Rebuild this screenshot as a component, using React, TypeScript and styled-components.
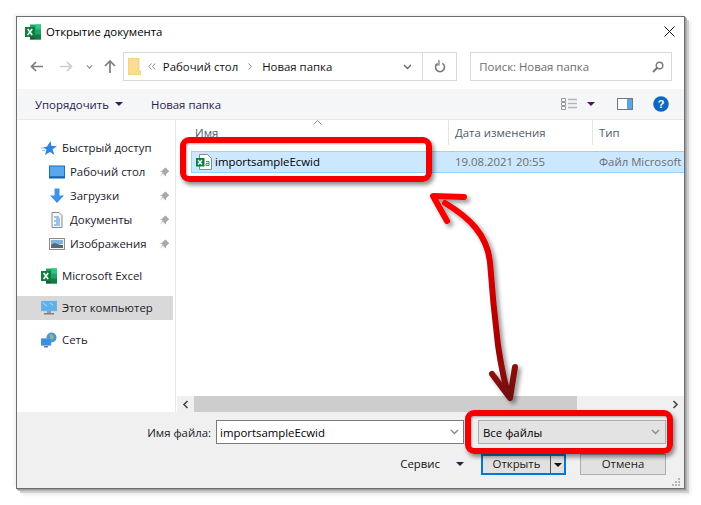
import React from 'react'
import styled, { createGlobalStyle } from 'styled-components'

const GlobalStyle = createGlobalStyle`
  html, body { margin: 0; padding: 0; background: #fff; }
  body { font-family: "Open Sans", "Noto Sans", "Liberation Sans", sans-serif; font-size: 11.4px; color: #1a1a1a; }
`

const Page = styled.div`
  width: 701px;
  height: 505px;
  padding: 16px 0 0 16px;
  box-sizing: border-box;
  overflow: hidden;
`
const Window = styled.div`
  position: relative;
  width: 669px;
  height: 473px;
  box-sizing: border-box;
  border: 1px solid #6e6e6e;
  background: #fff;
  display: flex;
  flex-direction: column;
  box-shadow: 1px 1px 0 #a0a0a0, 2px 2px 0 #b4b4b4, 4px 4px 0 #cfcfcf, 6px 6px 3px #ececec, -2px -2px 3px #f1f1f1;
`
const TitleBar = styled.div`
  height: 33px;
  box-sizing: border-box;
  padding: 0 0 4px 8px;
  display: flex;
  align-items: center;
  gap: 5px;
  color: #000;
`
const TitleText = styled.span`flex: 1;`
const CloseButton = styled.div`
  width: 30px;
  height: 26px;
  display: flex;
  align-items: center;
  justify-content: center;
`
const NavBar = styled.div`
  height: 39px;
  box-sizing: border-box;
  padding: 2px 12px 8px 12px;
  display: flex;
  align-items: stretch;
`
const NavButtons = styled.div`
  width: 94px;
  display: flex;
  align-items: center;
`
const NavIcon = styled.span<{ $w: number }>`
  width: ${p => p.$w}px;
  display: flex;
  justify-content: center;
`
const AddressBox = styled.div`
  width: 335px;
  box-sizing: border-box;
  border: 1px solid #d9d9d9;
  display: flex;
  align-items: center;
  padding-left: 4px;
  color: #111;
`
const Crumb = styled.span<{ $ml: number }>`
  display: flex;
  margin-left: ${p => p.$ml}px;
`
const AddressSpacer = styled.div`flex: 1;`
const AddressEnd = styled.div`
  width: 33px;
  height: 100%;
  display: flex;
  align-items: center;
  justify-content: center;
  border-left: 1px solid #d9d9d9;
`
const AddressChevron = styled.span`
  display: flex;
  margin-right: 10px;
`
const SearchBox = styled.div`
  width: 202px;
  margin-left: 13px;
  box-sizing: border-box;
  border: 1px solid #d9d9d9;
  display: flex;
  align-items: center;
  justify-content: space-between;
  padding: 0 7px 0 8px;
  color: #6d6d6d;
`
const Toolbar = styled.div`
  height: 31px;
  box-sizing: border-box;
  background: #f5f6f7;
  border-bottom: 1px solid #e8e9ea;
  display: flex;
  align-items: center;
  padding: 0 15px 0 18px;
  color: #2b1a4f;
`
const ToolLabel = styled.span<{ $w?: number }>`
  display: flex;
  align-items: center;
  gap: 6px;
  width: ${p => (p.$w ? `${p.$w}px` : 'auto')};
`
const ToolRight = styled.div`
  margin-left: auto;
  display: flex;
  align-items: center;
`
const ToolIcon = styled.span<{ $ml: number }>`
  display: flex;
  margin-left: ${p => p.$ml}px;
`
const Caret = styled.span<{ $color?: string }>`
  width: 0;
  height: 0;
  border-left: 4px solid transparent;
  border-right: 4px solid transparent;
  border-top: 4px solid ${p => p.$color || '#3a2050'};
`
const Main = styled.div`
  flex: 1;
  min-height: 0;
  display: flex;
`
const Sidebar = styled.div`
  width: 159px;
  box-sizing: border-box;
  border-right: 1px solid #e8e8e8;
  padding-top: 16px;
  display: flex;
  flex-direction: column;
`
const NavRow = styled.div<{ $sub?: boolean; $active?: boolean; $gap?: boolean }>`
  height: 24px;
  width: 156px;
  flex: none;
  margin-top: ${p => (p.$gap ? 8 : 0)}px;
  display: flex;
  align-items: center;
  gap: 5px;
  padding-left: ${p => (p.$sub ? 32 : 24)}px;
  box-sizing: border-box;
  background: ${p => (p.$active ? '#d9d9d9' : 'transparent')};
  color: #1a1a2a;
`
const NavLabel = styled.span`
  flex: 1;
  padding-bottom: 2px;
  white-space: nowrap;
`
const PinSlot = styled.span`
  display: flex;
  margin-right: 3px;
`
const FilePane = styled.div`
  flex: 1;
  min-width: 0;
  position: relative;
  display: flex;
  flex-direction: column;
`
const SortMark = styled.span`
  position: absolute;
  left: 137px;
  top: 0;
  display: flex;
`
const HeaderRow = styled.div`
  height: 25px;
  display: grid;
  grid-template-columns: 272px 144px 1fr;
`
const HeaderCell = styled.div<{ $first?: boolean }>`
  padding-left: ${p => (p.$first ? 19 : 6)}px;
  border-left: ${p => (p.$first ? 'none' : '1px solid #e5e5e5')};
  display: flex;
  align-items: center;
  box-sizing: border-box;
  color: #4d5a6a;
`
const FileRow = styled.div`
  height: 22px;
  margin: 6px 0 0 15px;
  display: grid;
  grid-template-columns: 256px 144px 1fr;
  background: #cce8ff;
  border-top: 1px solid #99d1ff;
  border-bottom: 1px solid #99d1ff;
  border-left: 1px solid #99d1ff;
  box-sizing: border-box;
  overflow: hidden;
`
const FileName = styled.div`
  display: flex;
  align-items: center;
  gap: 3px;
  padding-left: 4px;
  color: #000;
`
const FileNameText = styled.span`
  padding-bottom: 2px;
`
const FileMeta = styled.div`
  display: flex;
  align-items: center;
  padding: 0 0 2px 7px;
  color: #6d6d6d;
  white-space: nowrap;
`
const Spacer = styled.div`flex: 1;`
const Scrollbar = styled.div`
  height: 16px;
  margin-left: 1px;
  display: flex;
  align-items: center;
  background: #f0f0f0;
`
const ScrollArrow = styled.span`
  width: 17px;
  height: 100%;
  display: flex;
  align-items: center;
  justify-content: center;
`
const ScrollThumb = styled.div`
  width: 383px;
  height: 100%;
  background: #cdcdcd;
`
const ScrollTrack = styled.div`flex: 1;`
const Footer = styled.div`
  height: 76px;
  box-sizing: border-box;
  background: #f0f0f0;
  position: relative;
  padding: 8px 18px 0 0;
  display: flex;
  flex-direction: column;
  align-items: flex-end;
`
const InputRow = styled.div`
  display: flex;
  align-items: center;
  height: 24px;
`
const FieldLabel = styled.span`
  margin-right: 5px;
  color: #1a1a2a;
`
const NameInput = styled.div`
  width: 248px;
  height: 24px;
  box-sizing: border-box;
  background: #fff;
  border: 1px solid #7a7a7a;
  display: flex;
  align-items: center;
  justify-content: space-between;
  padding: 0 4px 0 3px;
  color: #000;
`
const FilterSelect = styled.div`
  width: 188px;
  height: 24px;
  margin-left: 14px;
  box-sizing: border-box;
  background: #e3e3e3;
  border: 1px solid #adadad;
  display: flex;
  align-items: center;
  justify-content: space-between;
  padding: 0 5px 0 4px;
  color: #000;
`
const ButtonRow = styled.div`
  display: flex;
  align-items: center;
  margin-top: 10px;
`
const ServiceLabel = styled.span`
  display: flex;
  align-items: center;
  gap: 16px;
  margin-right: 17px;
  padding-bottom: 2px;
  color: #111;
`
const OpenButton = styled.div`
  width: 85px;
  height: 21px;
  box-sizing: border-box;
  border: 2px solid #0078d7;
  background: #e1e1e1;
  display: flex;
  align-items: stretch;
`
const OpenText = styled.span`
  flex: 1;
  display: flex;
  align-items: center;
  justify-content: center;
  padding-bottom: 2px;
`
const OpenDrop = styled.span`
  width: 13px;
  display: flex;
  align-items: center;
  justify-content: center;
  border-left: 1px solid #555;
`
const CancelButton = styled.div`
  width: 86px;
  height: 21px;
  margin-left: 14px;
  padding-bottom: 2px;
  box-sizing: border-box;
  border: 1px solid #adadad;
  background: #e1e1e1;
  display: flex;
  align-items: center;
  justify-content: center;
`
const Grip = styled.svg`
  position: absolute;
  right: 3px;
  bottom: 1px;
`
const Highlight = styled.div`
  position: absolute;
  box-sizing: border-box;
  border: 6px solid #f50000;
  border-radius: 9px;
  box-shadow: 2px 3px 4px rgba(0, 0, 0, 0.45), inset 1px 1px 2px rgba(0, 0, 0, 0.3);
  pointer-events: none;
`
const NameHighlight = styled(Highlight)`
  left: 163px;
  top: 120px;
  width: 252px;
  height: 45px;
`
const FilterHighlight = styled(Highlight)`
  left: 448px;
  top: 393px;
  width: 208px;
  height: 44px;
`
const ArrowLayer = styled.svg`
  position: absolute;
  left: -17px;
  top: -17px;
  pointer-events: none;
  overflow: visible;
`

const ExcelIcon = () => (
  <svg width="16" height="16" viewBox="0 0 16 16">
    <rect x="5" y="0.5" width="11" height="15" fill="#21a366" />
    <rect x="10.5" y="0.5" width="5.5" height="5" fill="#33c481" />
    <rect x="10.5" y="10.5" width="5.5" height="5" fill="#107c41" />
    <rect x="5" y="10.5" width="5.5" height="5" fill="#185c37" />
    <rect x="0" y="3" width="10" height="10" fill="#107c41" />
    <path d="M2.6 5l4.6 6M7.2 5l-4.6 6" stroke="#fff" strokeWidth="1.5" fill="none" />
  </svg>
)

const PinIcon = () => (
  <svg width="11" height="11" viewBox="0 0 11 11">
    <path d="M6.5 0.5l4 4-1.2.5-2.2 2.3-.3 2.2L3.600 6.400 1 10l2.500-4.800L.8 4l2.200-.3L5.300 1.500z" fill="#a9a9a9" />
  </svg>
)

const Chevron = ({ color = '#666', w = 9 }: { color?: string; w?: number }) => (
  <svg width={w} height="6" viewBox="0 0 9 6">
    <path d="M1 1l3.500 3.500L8 1" stroke={color} strokeWidth="1.300" fill="none" />
  </svg>
)

const navItems = [
  {
    label: 'Рабочий стол',
    icon: (
      <svg width="16" height="14" viewBox="0 0 16 14">
        <rect x="0.5" y="1" width="15" height="11" fill="#5aa7ec" stroke="#1a6fc0" />
        <rect x="0" y="11.5" width="16" height="2" fill="#0f62b4" />
      </svg>
    ),
  },
  {
    label: 'Загрузки',
    icon: (
      <svg width="16" height="16" viewBox="0 0 16 16">
        <path d="M5.500 0.500h5v7H15l-7 7.500-7-7.500h4.500z" fill="#3f93e6" />
      </svg>
    ),
  },
  {
    label: 'Документы',
    icon: (
      <svg width="16" height="16" viewBox="0 0 16 16">
        <path d="M3 .5h7l3 3v12H3z" fill="#f7f7f7" stroke="#8a8a8a" />
        <path d="M5 5h5M7 7h4M5 9h6M7 11h4M5 13h6" stroke="#3b8fd9" />
      </svg>
    ),
  },
  {
    label: 'Изображения',
    icon: (
      <svg width="16" height="14" viewBox="0 0 16 14">
        <rect x="0.5" y="1.5" width="15" height="11" fill="#f4f4f4" stroke="#8d8d8d" />
        <rect x="2" y="3" width="12" height="4" fill="#7fb2dc" />
        <path d="M2 11V7.500l4-1.500 4 1.500 4 .5v3z" fill="#5b6770" />
      </svg>
    ),
  },
]

export default function App() {
  return (
    <Page>
      <GlobalStyle />
      <Window>
        <TitleBar>
          <ExcelIcon />
          <TitleText>Открытие документа</TitleText>
          <CloseButton>
            <svg width="11" height="11" viewBox="0 0 11 11">
              <path d="M.5.5l10 10M10.500.5l-10 10" stroke="#111" strokeWidth="1" fill="none" />
            </svg>
          </CloseButton>
        </TitleBar>

        <NavBar>
          <NavButtons>
            <NavIcon $w={15}>
              <svg width="13" height="11" viewBox="0 0 13 11">
                <path d="M6 1L1.500 5.500 6 10M2 5.500h11" stroke="#7d7d7d" strokeWidth="1.700" fill="none" />
              </svg>
            </NavIcon>
            <NavIcon $w={14} />
            <NavIcon $w={16}>
              <svg width="13" height="11" viewBox="0 0 13 11">
                <path d="M7 1l4.500 4.500L7 10M11 5.500H0" stroke="#cdcdcd" strokeWidth="1.700" fill="none" />
              </svg>
            </NavIcon>
            <NavIcon $w={30}>
              <Chevron color="#8a8a8a" w={7} />
            </NavIcon>
            <NavIcon $w={12}>
              <svg width="12" height="13" viewBox="0 0 12 13">
                <path d="M1 6l5-5 5 5M6 1.500V13" stroke="#7d7d7d" strokeWidth="1.700" fill="none" />
              </svg>
            </NavIcon>
          </NavButtons>
          <AddressBox>
            <svg width="13" height="17" viewBox="0 0 13 17">
              <path d="M0 0h11v13h2v4H0z" fill="#fbdd8d" stroke="#e3c26f" strokeWidth="0.600" />
            </svg>
            <Crumb $ml={7}>
              <svg width="8" height="7" viewBox="0 0 8 7">
                <path d="M3.500.5L.8 3.500l2.700 3M7.200.5L4.500 3.500l2.700 3" stroke="#888" fill="none" />
              </svg>
            </Crumb>
            <Crumb $ml={7}>Рабочий стол</Crumb>
            <Crumb $ml={9}>
              <svg width="6" height="7" viewBox="0 0 6 7">
                <path d="M1.500.5l3 3-3 3" stroke="#888" fill="none" />
              </svg>
            </Crumb>
            <Crumb $ml={9}>Новая папка</Crumb>
            <AddressSpacer />
            <AddressChevron>
              <Chevron />
            </AddressChevron>
            <AddressEnd>
              <svg width="12" height="13" viewBox="0 0 12 13">
                <path d="M8.300 3.300A4.500 4.500 0 1 1 3.700 3.300" stroke="#777" strokeWidth="1.500" fill="none" />
                <path d="M4 0v5H0" transform="translate(1 0)" stroke="#777" strokeWidth="1.200" fill="none" />
              </svg>
            </AddressEnd>
          </AddressBox>
          <SearchBox>
            Поиск: Новая папка
            <svg width="12" height="12" viewBox="0 0 12 12">
              <circle cx="7.500" cy="4.500" r="3.300" stroke="#777" strokeWidth="1.400" fill="none" />
              <path d="M5 7L1 11" stroke="#777" strokeWidth="2" />
            </svg>
          </SearchBox>
        </NavBar>

        <Toolbar>
          <ToolLabel $w={116}>
            Упорядочить <Caret />
          </ToolLabel>
          <ToolLabel>Новая папка</ToolLabel>
          <ToolRight>
            <ToolIcon $ml={0}>
              <svg width="17" height="13" viewBox="0 0 17 13">
                <path d="M.5.500h4v3h-4zM.5 4.500h4v3h-4zM.5 8.500h4v3h-4z" stroke="#9a9a9a" fill="none" />
                <path d="M7 1.500h9M7 5.500h9M7 9.500h9" stroke="#b5b5b5" strokeWidth="1.500" />
              </svg>
            </ToolIcon>
            <ToolIcon $ml={9}>
              <Caret $color="#4b1a55" />
            </ToolIcon>
            <ToolIcon $ml={22}>
              <svg width="16" height="12" viewBox="0 0 16 12">
                <rect x="0.500" y="0.500" width="15" height="11" fill="#fff" stroke="#777" />
                <rect x="10" y="1" width="5" height="10" fill="#58a6e6" />
              </svg>
            </ToolIcon>
            <ToolIcon $ml={20}>
              <svg width="16" height="16" viewBox="0 0 16 16">
                <circle cx="8" cy="8" r="7.800" fill="#0f68c0" />
                <text x="8" y="12" textAnchor="middle" fontSize="11" fontWeight="700" fill="#fff" fontFamily="Liberation Sans">?</text>
              </svg>
            </ToolIcon>
          </ToolRight>
        </Toolbar>

        <Main>
          <Sidebar>
            <NavRow>
              <svg width="16" height="15" viewBox="0 0 16 15">
                <path d="M9.500 0l1 5H16l-4.500 3.500L13.500 14 9 11l-5 3 1.500-5.500L2 6.500l4-1z" fill="#2f85dc" />
                <path d="M0 7h3M1 9.500h3" stroke="#8fc0ee" />
              </svg>
              <NavLabel>Быстрый доступ</NavLabel>
            </NavRow>
            {navItems.map(item => (
              <NavRow $sub key={item.label}>
                {item.icon}
                <NavLabel>{item.label}</NavLabel>
                <PinSlot>
                  <PinIcon />
                </PinSlot>
              </NavRow>
            ))}
            <NavRow $gap>
              <ExcelIcon />
              <NavLabel>Microsoft Excel</NavLabel>
            </NavRow>
            <NavRow $gap $active>
              <svg width="16" height="16" viewBox="0 0 16 16">
                <rect x="0" y="1" width="16" height="10" fill="#5cb0ee" stroke="#9ab8d0" strokeWidth="0.500" />
                <path d="M2 3l4 3M9 3l3 2" stroke="#b8e0fb" />
                <rect x="6" y="11" width="4" height="2" fill="#9a9a9a" />
                <rect x="3" y="13" width="10" height="1.500" fill="#7f7f7f" />
              </svg>
              <NavLabel>Этот компьютер</NavLabel>
            </NavRow>
            <NavRow $gap>
              <svg width="16" height="16" viewBox="0 0 16 16">
                <circle cx="10.500" cy="5.500" r="5" fill="#4b94d8" />
                <path d="M8 2l4 1 1 3-3 2z" fill="#8bbf7a" />
                <rect x="0" y="6.500" width="10" height="7" fill="#3a8ee0" stroke="#7da9cc" strokeWidth="0.500" />
                <rect x="3" y="14" width="4" height="1.500" fill="#777" />
              </svg>
              <NavLabel>Сеть</NavLabel>
            </NavRow>
          </Sidebar>

          <FilePane>
            <SortMark>
              <svg width="9" height="5" viewBox="0 0 9 5">
                <path d="M.5 4.500l4-4 4 4" stroke="#8a8a8a" fill="none" />
              </svg>
            </SortMark>
            <HeaderRow>
              <HeaderCell $first>Имя</HeaderCell>
              <HeaderCell>Дата изменения</HeaderCell>
              <HeaderCell>Тип</HeaderCell>
            </HeaderRow>
            <FileRow>
              <FileName>
                <svg width="16" height="16" viewBox="0 0 16 16">
                  <path d="M3.500.5h8l4 4v11h-12z" fill="#fff" stroke="#8a8a8a" />
                  <rect x="0" y="4" width="8.500" height="8.500" fill="#107c41" />
                  <path d="M2 6l4 4.500M6 6l-4 4.500" stroke="#fff" strokeWidth="1.300" />
                  <path d="M10 7.500h3M13 7.500v4h-3v-2h3" stroke="#21a366" fill="none" />
                </svg>
                <FileNameText>importsampleEcwid</FileNameText>
              </FileName>
              <FileMeta>19.08.2021 20:55</FileMeta>
              <FileMeta>Файл Microsoft</FileMeta>
            </FileRow>
            <Spacer />
            <Scrollbar>
              <ScrollArrow>
                <svg width="7" height="9" viewBox="0 0 7 9">
                  <path d="M5.500 1L2 4.500 5.500 8" stroke="#444" strokeWidth="1.600" fill="none" />
                </svg>
              </ScrollArrow>
              <ScrollThumb />
              <ScrollTrack />
              <ScrollArrow>
                <svg width="7" height="9" viewBox="0 0 7 9">
                  <path d="M1.500 1L5 4.500 1.500 8" stroke="#444" strokeWidth="1.600" fill="none" />
                </svg>
              </ScrollArrow>
            </Scrollbar>
          </FilePane>
        </Main>

        <Footer>
          <InputRow>
            <FieldLabel>Имя файла:</FieldLabel>
            <NameInput>
              importsampleEcwid
              <Chevron color="#888" />
            </NameInput>
            <FilterSelect>
              Все файлы
              <Chevron color="#888" />
            </FilterSelect>
          </InputRow>
          <ButtonRow>
            <ServiceLabel>
              Сервис <Caret $color="#1a2a44" />
            </ServiceLabel>
            <OpenButton>
              <OpenText>Открыть</OpenText>
              <OpenDrop>
                <Caret $color="#111" />
              </OpenDrop>
            </OpenButton>
            <CancelButton>Отмена</CancelButton>
          </ButtonRow>
          <Grip width="9" height="9" viewBox="0 0 9 9">
            <path d="M6 0h2v2H6zM3 3h2v2H3zM6 3h2v2H6zM0 6h2v2H0zM3 6h2v2H3zM6 6h2v2H6z" fill="#b8b8b8" />
          </Grip>
        </Footer>

        <NameHighlight />
        <FilterHighlight />

        <ArrowLayer width="701" height="505" viewBox="0 0 701 505">
          <defs>
            <linearGradient id="arrowFill" gradientUnits="userSpaceOnUse" x1="440" y1="200" x2="510" y2="400">
              <stop offset="0" stopColor="#ff0000" />
              <stop offset="0.45" stopColor="#cf0000" />
              <stop offset="0.8" stopColor="#9a0606" />
              <stop offset="1" stopColor="#6e0f0a" />
            </linearGradient>
            <filter id="arrowShadow" x="-30%" y="-10%" width="160%" height="120%">
              <feDropShadow dx="3" dy="3" stdDeviation="2" floodColor="#000" floodOpacity="0.4" />
            </filter>
          </defs>
          <g filter="url(#arrowShadow)" fill="none" stroke="url(#arrowFill)" strokeLinecap="round" strokeLinejoin="round">
            <path d="M445 203C470 218 487 235 490 262C492 290 495 320 498 345C501 365 505 385 509 396" strokeWidth="6" />
            <path d="M447 221L433 196L464 197" strokeWidth="6" />
            <path d="M492 374L510 398L515 367" strokeWidth="6" />
          </g>
        </ArrowLayer>
      </Window>
    </Page>
  )
}
